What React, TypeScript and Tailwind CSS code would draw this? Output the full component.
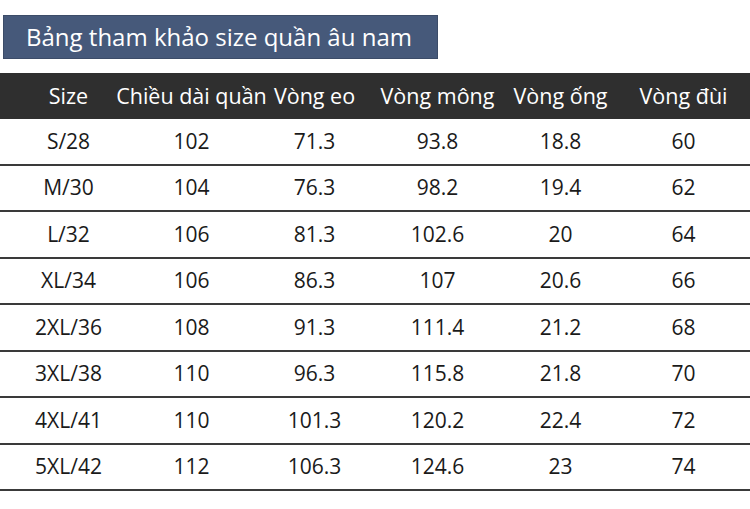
const headers = ["Size", "Chiều dài quần", "Vòng eo", "Vòng mông", "Vòng ống", "Vòng đùi"];

const rows: string[][] = [
  ["S/28", "102", "71.3", "93.8", "18.8", "60"],
  ["M/30", "104", "76.3", "98.2", "19.4", "62"],
  ["L/32", "106", "81.3", "102.6", "20", "64"],
  ["XL/34", "106", "86.3", "107", "20.6", "66"],
  ["2XL/36", "108", "91.3", "111.4", "21.2", "68"],
  ["3XL/38", "110", "96.3", "115.8", "21.8", "70"],
  ["4XL/41", "110", "101.3", "120.2", "22.4", "72"],
  ["5XL/42", "112", "106.3", "124.6", "23", "74"],
];

export default function App() {
  return (
    <div
      className="w-[750px] h-[509px] bg-white overflow-hidden pt-[15px]"
      style={{ fontFamily: '"Open Sans", "Noto Sans", sans-serif' }}
    >
      {/* title */}
      <div className="ml-[3px] w-[435px] h-[44px] bg-[#46597a] border border-[#3c4c68] flex items-center pl-[22px] text-white text-[24px] leading-none">
        Bảng tham khảo size quần âu nam
      </div>

      {/* table */}
      <div className="mt-[14px]">
        <div className="h-[46px] bg-[#2f2f2f] grid grid-cols-[repeat(6,123px)] pl-[7px] items-center text-white text-[21.5px]">
          {headers.map((h) => (
            <div key={h} className="flex justify-center whitespace-nowrap">
              {h}
            </div>
          ))}
        </div>
        {rows.map((r) => (
          <div
            key={r[0]}
            className="h-[46.5px] border-b-2 border-[#3a3a3a] grid grid-cols-[repeat(6,123px)] pl-[7px] items-center text-[#1a1a1a] text-[21px]"
          >
            {r.map((c, i) => (
              <div key={i} className="flex justify-center">
                {c}
              </div>
            ))}
          </div>
        ))}
      </div>
    </div>
  );
}
